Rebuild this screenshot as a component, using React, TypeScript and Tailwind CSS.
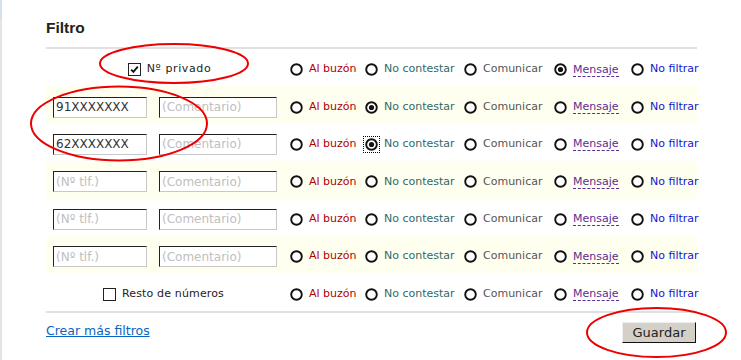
import React from "react";

type Choice = "buzon" | "contestar" | "comunicar" | "mensaje" | "nofiltrar";

const OPTIONS: { key: Choice; label: string; className: string }[] = [
  { key: "buzon", label: "Al buzón", className: "text-[#b00000]" },
  { key: "contestar", label: "No contestar", className: "text-[#2f6a6a]" },
  { key: "comunicar", label: "Comunicar", className: "text-[#555555]" },
  {
    key: "mensaje",
    label: "Mensaje",
    className: "text-[#5c2d91] border-b border-dashed border-[#5c2d91] leading-[13px]",
  },
  { key: "nofiltrar", label: "No filtrar", className: "text-[#1414d2]" },
];

type Row =
  | { kind: "check"; label: string; checked: boolean; selected: Choice | null }
  | { kind: "phone"; number: string; selected: Choice | null; focus?: Choice };

const ROWS: Row[] = [
  { kind: "check", label: "Nº privado", checked: true, selected: "mensaje" },
  { kind: "phone", number: "91XXXXXXX", selected: "contestar" },
  { kind: "phone", number: "62XXXXXXX", selected: "contestar", focus: "contestar" },
  { kind: "phone", number: "", selected: null },
  { kind: "phone", number: "", selected: null },
  { kind: "phone", number: "", selected: null },
  { kind: "check", label: "Resto de números", checked: false, selected: null },
];

function Radio({ on, focus }: { on: boolean; focus?: boolean }) {
  return (
    <span
      className={
        "inline-flex shrink-0 " +
        (focus ? "outline-1 outline-dotted outline-black outline-offset-1" : "")
      }
    >
      <svg width="13" height="13" viewBox="0 0 13 13">
        <circle cx="6.5" cy="6.5" r="5.3" fill="#fff" stroke="#111" strokeWidth="1.9" />
        {on && <circle cx="6.5" cy="6.5" r="2.6" fill="#111" />}
      </svg>
    </span>
  );
}

function Checkbox({ on }: { on: boolean }) {
  return (
    <span className="inline-flex w-[13px] h-[13px] shrink-0 border border-[#222] bg-white">
      {on && (
        <svg width="11" height="11" viewBox="0 0 11 11">
          <path d="M2.2 5.6 L4.4 7.8 L8.8 2.6" fill="none" stroke="#111" strokeWidth="1.8" />
        </svg>
      )}
    </span>
  );
}

function Field({ value, placeholder, width }: { value: string; placeholder: string; width: string }) {
  return (
    <input
      readOnly
      defaultValue={value}
      placeholder={placeholder}
      className={
        width +
        " h-[21px] px-[2px] bg-white border border-t-[#222] border-l-[#222] border-r-[#c8c8c8] border-b-[#c8c8c8] text-[12px] text-[#333] placeholder:text-[#c0c0c0] outline-none font-['DejaVu_Sans',sans-serif]"
      }
    />
  );
}

export default function App() {
  return (
    <div className="relative flex w-[741px] h-[360px] bg-white overflow-hidden font-['DejaVu_Sans',sans-serif]">
      <div className="flex flex-col w-[2px] shrink-0">
        <div className="h-[20px] bg-[#d6dfea]" />
        <div className="flex-1 bg-[#e4e4e4]" />
      </div>

      <div className="pl-[44px] pt-[19px] w-[697px]">
        <h2 className="font-['Liberation_Sans',Arial,sans-serif] font-bold text-[15.5px] leading-[18px] text-[#222]">
          Filtro
        </h2>

        <div className="mt-[10px] w-[651px] border-t-2 border-[#e0e0e0]">
          {ROWS.map((row, i) => (
            <div
              key={i}
              className={
                "grid grid-cols-[244px_75px_99px_90px_77px_66px] items-center h-[37.4px] pt-[4px] " +
                (i % 2 === 1 ? "bg-[#fffff0]" : "bg-white")
              }
            >
              {row.kind === "check" ? (
                <label
                  className={
                    "flex items-center justify-center gap-[6px] text-[11px] text-[#222] whitespace-nowrap " +
                    (row.checked ? "pl-[3px]" : "pr-[9px]")
                  }
                >
                  <Checkbox on={row.checked} />
                  <span className={row.checked ? "tracking-[0.6px]" : "tracking-[0.15px]"}>{row.label}</span>
                </label>
              ) : (
                <div className="flex items-center gap-[12px] pl-[7px]">
                  <Field value={row.number} placeholder="(Nº tlf.)" width="w-[94px]" />
                  <Field value="" placeholder="(Comentario)" width="w-[118px]" />
                </div>
              )}
              {OPTIONS.map((opt) => (
                <div key={opt.key} className="flex items-center gap-[6px] text-[11px] whitespace-nowrap">
                  <Radio on={row.selected === opt.key} focus={row.kind === "phone" && row.focus === opt.key} />
                  <span className={opt.className}>{opt.label}</span>
                </div>
              ))}
            </div>
          ))}
        </div>

        <div className="w-[651px] border-t-2 border-[#e0e0e0] flex justify-between items-start pt-[9px]">
          <a href="#" className="text-[12.5px] text-[#0a64c0] underline leading-[15px] mt-[1px]">
            Crear más filtros
          </a>
          <button className="w-[74px] h-[21px] mr-[1px] bg-[#d4d0c8] border border-t-[#eeeeee] border-l-[#eeeeee] border-r-[#111] border-b-[#111] text-[13px] text-[#222] leading-none font-['DejaVu_Sans',sans-serif]">
            Guardar
          </button>
        </div>
      </div>

      <svg
        className="absolute inset-0 pointer-events-none"
        width="741"
        height="360"
        viewBox="0 0 741 360"
      >
        <ellipse cx="174" cy="63.5" rx="74" ry="19.5" fill="none" stroke="#ee0000" strokeWidth="2" />
        <ellipse cx="119" cy="123.5" rx="88" ry="37" fill="none" stroke="#ee0000" strokeWidth="2" />
        <ellipse cx="656.5" cy="332.5" rx="69.5" ry="24.5" fill="none" stroke="#ee0000" strokeWidth="2" />
      </svg>
    </div>
  );
}
